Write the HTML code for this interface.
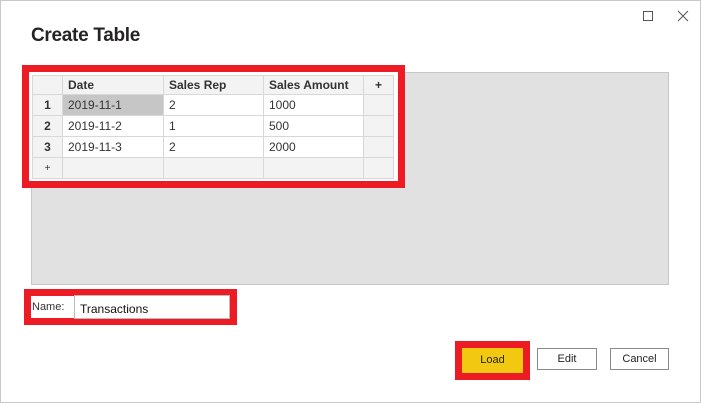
<!DOCTYPE html>
<html><head><meta charset="utf-8"><style>
*{margin:0;padding:0;box-sizing:border-box}
body{width:701px;height:403px;background:#fff;font-family:"Liberation Sans",sans-serif;position:relative;overflow:hidden;color:#222}
.abs{position:absolute}
.frame{left:0;top:0;width:701px;height:403px;border:1px solid #c8c8c8}
.title{left:31px;top:25px;font-size:19px;color:#252423;font-weight:bold;letter-spacing:-0.3px}
.gray{left:31px;top:72px;width:638px;height:213px;background:#e1e1e1;border:1px solid #c6c6c6}
.red{border:7px solid #ed1c24;background:#fff}
table{position:absolute;left:32px;top:75px;border-collapse:collapse;font-size:12px}
td{border:1px solid #d8d8d8;height:21px;padding:0 5px;background:#fff;color:#333}
tr.h td{background:#f3f3f3;font-weight:bold;height:19px}
td.rh{background:#f3f3f3;font-weight:bold;text-align:center;width:30px}
td.pl{background:#f3f3f3;width:30px;text-align:center}
tr.last td{background:#f3f3f3}
.btn{height:22px;border:1px solid #8a8a8a;font-size:11px;text-align:center;line-height:20px;background:#fff}
</style></head><body>
<div class="abs frame"></div>
<div class="abs" style="left:643px;top:11px;width:10px;height:10px;border:1px solid #555"></div>
<svg class="abs" style="left:677px;top:10px" width="12" height="12"><path d="M1 1L11 11M11 1L1 11" stroke="#555" stroke-width="1"/></svg>
<div class="abs title">Create Table</div>
<div class="abs gray"></div>
<div class="abs red" style="left:22px;top:65px;width:383px;height:123px"></div>
<table>
<tr class="h"><td class="rh"></td><td style="width:101px">Date</td><td style="width:100px">Sales Rep</td><td style="width:100px">Sales Amount</td><td class="pl">+</td></tr>
<tr><td class="rh">1</td><td style="background:#c6c6c6">2019-11-1</td><td>2</td><td>1000</td><td class="pl"></td></tr>
<tr><td class="rh">2</td><td>2019-11-2</td><td>1</td><td>500</td><td class="pl"></td></tr>
<tr><td class="rh">3</td><td>2019-11-3</td><td>2</td><td>2000</td><td class="pl"></td></tr>
<tr class="last"><td class="rh" style="font-weight:normal;font-size:10px">+</td><td></td><td></td><td></td><td class="pl"></td></tr>
</table>
<div class="abs red" style="left:24px;top:289px;width:213px;height:36px"></div>
<div class="abs" style="left:32px;top:301px;font-size:11px;color:#333">Name:</div>
<div class="abs" style="left:74px;top:295px;width:156px;height:24px;border:1px solid #bbb;font-size:12px;padding:6px 0 0 5px;color:#111">Transactions</div>
<div class="abs red" style="left:455px;top:341px;width:75px;height:39px"></div>
<div class="abs btn" style="left:462px;top:348px;width:61px;height:25px;line-height:23px;background:#f2c811;border-color:#f2c811">Load</div>
<div class="abs btn" style="left:537px;top:348px;width:60px">Edit</div>
<div class="abs btn" style="left:610px;top:348px;width:59px">Cancel</div>
</body></html>
